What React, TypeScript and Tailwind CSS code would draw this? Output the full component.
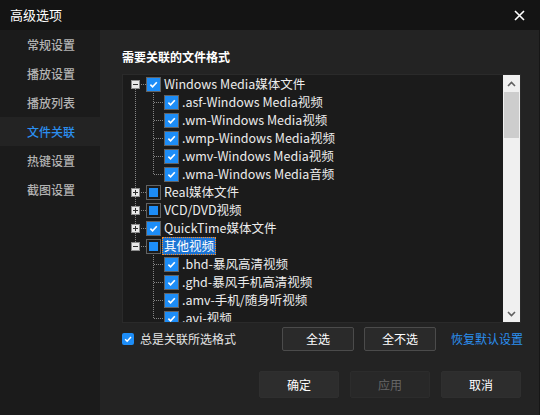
import React from 'react';

type Mark = 'checked' | 'partial';

type Node = {
  label: string;
  mark: Mark;
  open?: boolean;
  selected?: boolean;
  children?: string[];
};

const tree: Node[] = [
  {
    label: 'Windows Media媒体文件',
    mark: 'checked',
    open: true,
    children: [
      '.asf-Windows Media视频',
      '.wm-Windows Media视频',
      '.wmp-Windows Media视频',
      '.wmv-Windows Media视频',
      '.wma-Windows Media音频',
    ],
  },
  { label: 'Real媒体文件', mark: 'partial' },
  { label: 'VCD/DVD视频', mark: 'partial' },
  { label: 'QuickTime媒体文件', mark: 'checked' },
  {
    label: '其他视频',
    mark: 'partial',
    open: true,
    selected: true,
    children: ['.bhd-暴风高清视频', '.ghd-暴风手机高清视频', '.amv-手机/随身听视频', '.avi-视频'],
  },
];

const menu = ['常规设置', '播放设置', '播放列表', '文件关联', '热键设置', '截图设置'];

const font = { fontFamily: '"Noto Sans CJK SC", "Microsoft YaHei", sans-serif' };

function Tick({ className }: { className?: string }) {
  return (
    <svg viewBox="0 0 12 12" className={className}>
      <path d="M2.6 6.2 5 8.6 9.6 3.6" fill="none" stroke="#fff" strokeWidth="1.8" />
    </svg>
  );
}

function TreeCheck({ mark }: { mark: Mark }) {
  if (mark === 'checked') {
    return (
      <span className="flex h-[15px] w-[15px] shrink-0 items-center justify-center border border-[#626262] bg-[#1d8df7]">
        <Tick className="h-[11px] w-[11px]" />
      </span>
    );
  }
  return (
    <span className="flex h-[15px] w-[15px] shrink-0 items-center justify-center border border-[#626262] bg-[#1b1b1b]">
      <span className="h-[9px] w-[9px] bg-[#1d8df7]" />
    </span>
  );
}

// dotted connector lines for one tree column, with an optional +/- box
function Guide({
  width,
  up,
  down,
  right,
  toggle,
}: {
  width: number;
  up?: boolean;
  down?: boolean;
  right?: boolean;
  toggle?: 'plus' | 'minus';
}) {
  const dot = { stroke: '#858585', strokeWidth: 1, strokeDasharray: '1 1', shapeRendering: 'crispEdges' as const };
  return (
    <svg width={width} height={18} className="shrink-0">
      {up && <line x1={9.5} y1={0} x2={9.5} y2={toggle ? 5 : 9} style={dot} />}
      {down && <line x1={9.5} y1={toggle ? 14 : 10} x2={9.5} y2={18} style={dot} />}
      {right && <line x1={toggle ? 15 : 10} y1={9.5} x2={width} y2={9.5} style={dot} />}
      {toggle && (
        <g shapeRendering="crispEdges">
          <rect x={5.5} y={5.5} width={8} height={8} fill="#e9e9e9" stroke="#8c8c8c" />
          <line x1={7} y1={9.5} x2={12} y2={9.5} stroke="#2f2f2f" />
          {toggle === 'plus' && <line x1={9.5} y1={7} x2={9.5} y2={12} stroke="#2f2f2f" />}
        </g>
      )}
    </svg>
  );
}

function FileTree() {
  return (
    <div className="flex-1 overflow-hidden pl-[3px] text-[12.5px] text-[#ececec]">
      {tree.map((node, i) => {
        const first = i === 0;
        const last = i === tree.length - 1;
        return (
          <div key={node.label}>
            <div className="flex h-[18px] items-center">
              <Guide width={20} up={!first} down={!last} right toggle={node.open ? 'minus' : 'plus'} />
              <TreeCheck mark={node.mark} />
              <span
                className={
                  node.selected
                    ? 'ml-[1px] border border-dotted border-[#ff8a1c] bg-[#1c74d4] px-[1px] leading-[16px] text-white'
                    : 'ml-[1px] border border-transparent px-[1px] leading-[16px]'
                }
              >
                {node.label}
              </span>
            </div>
            {node.open &&
              node.children?.map((child, j) => (
                <div key={child} className="flex h-[18px] items-center">
                  <Guide width={18} up={!last} down={!last} />
                  <Guide width={20} up down={j < node.children!.length - 1} right />
                  <TreeCheck mark="checked" />
                  <span className="ml-[3px] whitespace-nowrap leading-[16px]">{child}</span>
                </div>
              ))}
          </div>
        );
      })}
    </div>
  );
}

function ScrollBar() {
  return (
    <div className="flex w-[17px] shrink-0 flex-col bg-[#f0f0f0]">
      <div className="flex h-[17px] items-center justify-center">
        <svg width="9" height="6" viewBox="0 0 9 6">
          <path d="M1 5 4.5 1.5 8 5" fill="none" stroke="#606060" strokeWidth="1.6" />
        </svg>
      </div>
      <div className="mx-[1px] h-[46px] bg-[#cdcdcd]" />
      <div className="flex-1" />
      <div className="flex h-[17px] items-center justify-center">
        <svg width="9" height="6" viewBox="0 0 9 6">
          <path d="M1 1 4.5 4.5 8 1" fill="none" stroke="#606060" strokeWidth="1.6" />
        </svg>
      </div>
    </div>
  );
}

export default function App() {
  return (
    <div className="flex h-[415px] w-[540px] flex-col bg-[#141414] text-[12px]" style={font}>
      {/* title bar */}
      <div className="flex h-[30px] shrink-0 items-center justify-between pl-[10px] pr-[15px]">
        <span className="text-[13px] text-white">高级选项</span>
        <svg width="11" height="11" viewBox="0 0 11 11">
          <path d="M1 1 10 10M10 1 1 10" stroke="#fff" strokeWidth="1.6" />
        </svg>
      </div>

      <div className="flex flex-1">
        {/* side menu */}
        <div className="w-[100px] shrink-0 bg-[#1b1b1b]">
          {menu.map((item) => (
            <div
              key={item}
              className={
                item === '文件关联'
                  ? 'flex h-[29px] items-center bg-[#232323] pl-[27px] font-medium text-[#2b8ff0]'
                  : 'flex h-[29px] items-center pl-[27px] font-medium text-[#b3b3b3]'
              }
            >
              {item}
            </div>
          ))}
        </div>

        {/* file association panel */}
        <div className="flex flex-1 flex-col border-r border-[#161616] bg-[#232323] pl-[22px] pr-[18px]">
          <div className="mt-[19px] font-bold leading-[16px] text-white">需要关联的文件格式</div>

          <div className="mt-[9px] flex h-[249px] border border-[#2a2a2a] bg-[#1b1b1b]">
            <FileTree />
            <ScrollBar />
          </div>

          <div className="mr-[-2px] mt-[4px] flex h-[24px] items-center justify-between">
            <label className="flex items-center text-[#e6e6e6]">
              <span className="flex h-[12px] w-[12px] items-center justify-center rounded-[2px] bg-[#1d8df7]">
                <Tick className="h-[10px] w-[10px]" />
              </span>
              <span className="ml-[6px]">总是关联所选格式</span>
            </label>
            <div className="flex items-center">
              <button className="h-[24px] w-[72px] rounded-[2px] border border-[#4b4b4b] bg-[#2a2a2a] text-white">
                全选
              </button>
              <button className="ml-[10px] h-[24px] w-[72px] rounded-[2px] border border-[#4b4b4b] bg-[#2a2a2a] text-white">
                全不选
              </button>
              <span className="ml-[15px] text-[#2b8ff0]">恢复默认设置</span>
            </div>
          </div>

          <div className="mt-[20px] flex justify-end gap-[11px]">
            <button className="h-[27px] w-[80px] rounded-[2px] border border-[#2f2f2f] bg-[#2d2d2d] text-white">
              确定
            </button>
            <button className="h-[27px] w-[80px] rounded-[2px] border border-[#2c2c2c] bg-[#282828] text-[#666]">
              应用
            </button>
            <button className="h-[27px] w-[80px] rounded-[2px] border border-[#2f2f2f] bg-[#2d2d2d] text-white">
              取消
            </button>
          </div>
        </div>
      </div>
    </div>
  );
}
